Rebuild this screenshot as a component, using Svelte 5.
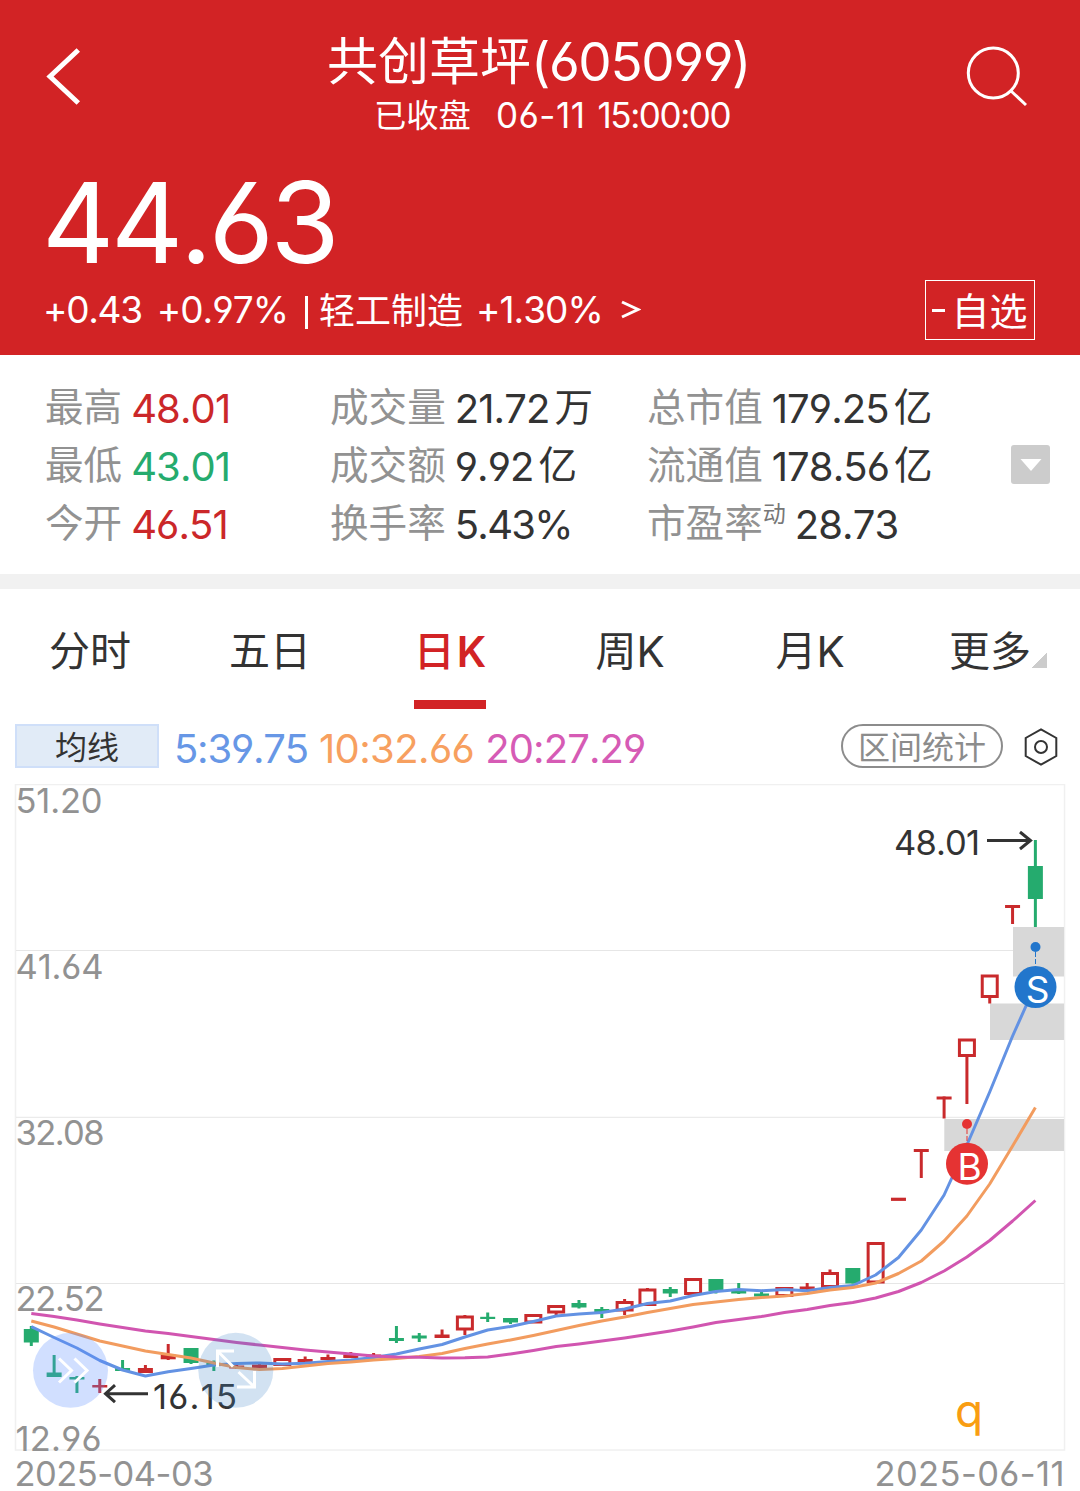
<script>
  const stats = [
    [
      { label: '最高', value: '48.01', tone: 'up' },
      { label: '最低', value: '43.01', tone: 'down' },
      { label: '今开', value: '46.51', tone: 'up' }
    ],
    [
      { label: '成交量', value: '21.72', unit: '万' },
      { label: '成交额', value: '9.92', unit: '亿' },
      { label: '换手率', value: '5.43%', tone: 'pct' }
    ],
    [
      { label: '总市值', value: '179.25', unit: '亿' },
      { label: '流通值', value: '178.56', unit: '亿' },
      { label: '市盈率', sup: '动', value: '28.73' }
    ]
  ];

  const tabs = [
    { cn: '分时' },
    { cn: '五日' },
    { cn: '日', k: true, active: true },
    { cn: '周', k: true },
    { cn: '月', k: true },
    { cn: '更多', more: true }
  ];

  // One candle per trading day: [kind, body top, body bottom, wick top, wick bottom]
  // g = falling, r = rising and flat, h = rising and hollow
  const candles = [
    ['g', 1329, 1342.5, 1326, 1346], ['g', 1372.5, 1377, 1355, 1377], ['g', 1377, 1379.5, 1376, 1393],
    ['r', 1385, 1387.5, 1379, 1393], ['g', 1368, 1371, 1360, 1371], ['r', 1368, 1373, 1365, 1373],
    ['r', 1354.7, 1359.3, 1344, 1360], ['g', 1348, 1363, 1348, 1364], ['g', 1363, 1365, 1360.5, 1371],
    ['r', 1365.5, 1368.5, 1365, 1369], ['r', 1364.5, 1370, 1364, 1370], ['h', 1358, 1366, 1358, 1366],
    ['r', 1359, 1362.5, 1356.5, 1363], ['r', 1357, 1360, 1354.5, 1360], ['r', 1354.7, 1358, 1352, 1358],
    ['r', 1354.5, 1358, 1353, 1358], ['g', 1338, 1341, 1326, 1343], ['g', 1335.5, 1338.5, 1333, 1342],
    ['r', 1334.5, 1338, 1329.5, 1338], ['h', 1315.5, 1330.5, 1315, 1335], ['g', 1316.8, 1319, 1312.5, 1322],
    ['g', 1318, 1322.5, 1318, 1324], ['h', 1314, 1323.5, 1314, 1323], ['h', 1305, 1313.5, 1305, 1315],
    ['g', 1303, 1307.5, 1300, 1308.5], ['g', 1309, 1312, 1307, 1318], ['h', 1301, 1311.5, 1299, 1315],
    ['h', 1288.5, 1306, 1288, 1306], ['g', 1289, 1293.5, 1287, 1297], ['h', 1278, 1295, 1278, 1295],
    ['g', 1279, 1291, 1279, 1293.5], ['g', 1290.5, 1293.5, 1283, 1294], ['g', 1293.5, 1296.5, 1291, 1297],
    ['h', 1287, 1297, 1287, 1297], ['r', 1286.5, 1289.5, 1283, 1290], ['h', 1272, 1288, 1269.5, 1288],
    ['g', 1268, 1283.5, 1268, 1283.5], ['h', 1242, 1283.5, 1242, 1283.5], ['r', 1197.7, 1200.9, 1198, 1200],
    ['r', 1149, 1152, 1149, 1178], ['r', 1096.5, 1099.5, 1096.5, 1118.5], ['h', 1038.5, 1057, 1039, 1104],
    ['h', 974.5, 998, 975, 1003.5], ['r', 905, 908, 905, 924], ['g', 866, 899, 840, 927]
  ];
  const ma5 = [1326.7, 1337.5, 1348, 1360.5, 1370, 1376, 1371.7, 1368.5, 1365, 1363.5, 1363, 1364, 1363.3, 1361.5, 1360, 1357.5, 1354, 1349, 1344.5, 1337, 1330, 1326.5, 1321.5, 1316, 1314, 1312.5, 1309, 1303.5, 1301, 1295.5, 1291.5, 1289.5, 1290.7, 1289.5, 1290.7, 1287.5, 1285.5, 1275, 1257.5, 1230, 1195, 1145, 1092, 1036, 985];
  const ma10 = [1321, 1327, 1334, 1341, 1346, 1351, 1354.5, 1358, 1363, 1367.5, 1369.5, 1368.5, 1366, 1363.5, 1362, 1360, 1358.5, 1356.5, 1353.5, 1348.5, 1344, 1340, 1335.5, 1330.5, 1325.5, 1321, 1317, 1312.5, 1308.5, 1304.5, 1302, 1299.5, 1297.5, 1296, 1293.5, 1290, 1287.5, 1283, 1273.5, 1261, 1241, 1216, 1184, 1146, 1107.5];
  const ma20 = [1313.5, 1316.5, 1320, 1324, 1327.5, 1331, 1333.5, 1336.5, 1339.5, 1342.5, 1345, 1347.5, 1350, 1352, 1354, 1356, 1357, 1357.3, 1358, 1357.8, 1357, 1354, 1350.5, 1346.5, 1344, 1341, 1338, 1334.5, 1331, 1327, 1322.5, 1319.5, 1316.5, 1312.5, 1309.5, 1305.5, 1302.5, 1298, 1291.5, 1282.5, 1271, 1257, 1240.5, 1221, 1200.5];

  const cx = (i) => 31.3 + i * 22.82;
  const line = (values) => values.map((y, i) => `${cx(i).toFixed(1)},${y}`).join(' ');

  const axis = [
    { t: '51.20', y: 812.5, w: 85 },
    { t: '41.64', y: 978.5, w: 86 },
    { t: '32.08', y: 1144.5, w: 87 },
    { t: '22.52', y: 1310.5, w: 87 },
    { t: '12.96', y: 1450.5, w: 84 }
  ];
</script>

<div class="page">
  <header>
    <div class="bar">
      <svg class="back" width="40" height="64" viewBox="44 45 40 64"><path d="M78.3 50 50 76.5 78.3 103" /></svg>
      <div class="heading">
        <h1><span>共创草坪</span><span class="num code">(605099)</span></h1>
        <p class="status"><span>已收盘</span><span class="num date">06-11</span><span class="num time">15:00:00</span></p>
      </div>
      <svg class="search" width="66" height="66" viewBox="964 43 66 66"><circle cx="993.3" cy="73" r="25" /><path d="m1011 91 15 14" /></svg>
    </div>
    <div class="price num">44.63</div>
    <div class="change">
      <span class="num c1">+0.43</span>
      <span class="num c2">+0.97%</span>
      <i class="sep"></i>
      <span class="sector">轻工制造</span>
      <span class="num c3">+1.30%</span>
      <svg class="gt" width="20" height="20" viewBox="0 0 20 20"><path d="M1 2 17 9.500 1 17" /></svg>
      <button class="fav"><i class="minus"></i><span>自选</span></button>
    </div>
  </header>

  <section class="stats">
    {#each stats as col}
      <div class="col">
        {#each col as s}
          <div class="stat">
            <span class="label">{s.label}</span>{#if s.sup}<span class="sup">{s.sup}</span>{/if}<span class="num value {s.tone ?? ''}">{s.value}</span>{#if s.unit}<span class="unit">{s.unit}</span>{/if}
          </div>
        {/each}
      </div>
    {/each}
    <div class="expand"><svg width="22" height="12" viewBox="0 0 22 12"><path d="M.5 0h21L11 12z" /></svg></div>
  </section>

  <nav>
    {#each tabs as t}
      <div class="tab" class:active={t.active}>
        <span>{t.cn}</span>{#if t.k}<span class="num k">K</span>{/if}{#if t.more}<i class="corner"></i>{/if}
      </div>
    {/each}
  </nav>

  <div class="tools">
    <div class="ma">均线</div>
    <span class="num m m5">5:39.75</span>
    <span class="num m m10">10:32.66</span>
    <span class="num m m20">20:27.29</span>
    <div class="range">区间统计</div>
    <svg class="gear" width="36" height="40" viewBox="1023 727 36 40"><path d="M1041 729.3 1056.3 738v18L1041 764.7 1025.7 756v-18z" /><circle cx="1041" cy="747" r="6" /></svg>
  </div>

  <svg class="chart" width="1080" height="707" viewBox="0 784 1080 707">
    <g class="grid">
      <rect x="15.5" y="784.5" width="1049" height="665.5" />
      <path d="M16 950.5h1048M16 1117.3h1048M16 1283.5h1048" />
    </g>
    <g class="gap">
      <rect x="1013" y="927" width="51" height="49.5" />
      <rect x="990" y="1003.5" width="74" height="36.5" />
      <rect x="944.3" y="1119" width="119.7" height="32" />
    </g>
    <g class="axis">
      {#each axis as a}
        <text x="15.5" y={a.y} textLength={a.w + 2}>{a.t}</text>
      {/each}
      <text x="14.5" y="1486" textLength="199">2025-04-03</text>
      <text x="874.5" y="1486" textLength="190">2025-06-11</text>
    </g>
    {#each candles as [kind, top, bottom, high, low], i}
      <g class={kind}>
        {#if kind === 'h'}
          <path d="M{cx(i)} {high}V{top + 1}M{cx(i)} {bottom - 1}V{low}" />
          <rect x={cx(i) - 7.5} y={top + 1.5} width="15" height={bottom - top - 3} />
        {:else}
          <path d="M{cx(i)} {high}V{low}" />
          <rect x={cx(i) - 7.5} y={top} width="15" height={bottom - top} />
        {/if}
      </g>
    {/each}
    <g class="line">
      <polyline class="l5" points={line(ma5)} />
      <polyline class="l10" points={line(ma10)} />
      <polyline class="l20" points={line(ma20)} />
    </g>
    <g class="mark">
      <text x="894" y="854.5" textLength="86">48.01</text>
      <path d="M987 840.5h43M1020 832l10.5 8.5-10.5 8.5" />
      <text x="153" y="1408.5" textLength="84">16.15</text>
      <path d="M148 1393.7h-42M115 1385.2l-9.5 8.5 9.5 8.5" />
    </g>
    <g class="sell">
      <circle cx="1035.5" cy="947" r="5" />
      <path d="M1035.5 952v14" />
      <circle cx="1035.5" cy="987" r="21" />
      <text x="1037.5" y="1002.5" text-anchor="middle">S</text>
    </g>
    <g class="buy">
      <circle cx="967" cy="1124" r="5" />
      <path d="M967 1129v14" />
      <circle cx="967" cy="1163.7" r="21" />
      <text x="969.5" y="1179.5" text-anchor="middle">B</text>
    </g>
    <circle class="forward" cx="70.5" cy="1370.3" r="37.5" />
    <circle class="full" cx="235.8" cy="1370.3" r="37.5" />
    <path class="glyph" d="M59 1358.5 71.5 1370.5 59 1382.5M74.5 1358.5 87 1370.5 74.5 1382.5" />
    <path class="glyph" d="M217.5 1367v-16h16.5M217.5 1351l15.5 15.5M237 1387h17.5v-16M254.5 1387l-16-15" />
    <text class="q" x="955" y="1427">q</text>
  </svg>
</div>

<style>
  :global(body) {
    margin: 0;
    background: #fff;
  }
  .page {
    width: 1080px;
    height: 1491px;
    overflow: hidden;
    display: flex;
    flex-direction: column;
    font-family: 'Noto Sans CJK SC', sans-serif;
    color: #333;
    background: #fff;
  }
  .num,
  text {
    font-family: Inter, 'Noto Sans CJK SC', sans-serif;
    font-feature-settings: 'cv03', 'cv04', 'calt' 0;
    font-kerning: none;
  }
  svg {
    display: block;
    flex: none;
    fill: none;
  }
  header {
    height: 355px;
    box-sizing: border-box;
    background: #d22325;
    color: #fff;
  }
  .bar {
    height: 160px;
    display: flex;
    justify-content: space-between;
    padding: 0 50px 0 44px;
  }
  .back {
    margin-top: 45px;
    stroke: #fff;
    stroke-width: 5;
  }
  .search {
    margin-top: 43px;
    stroke: #fff;
    stroke-width: 3;
  }
  .heading {
    flex: 1;
    display: flex;
    flex-direction: column;
    align-items: flex-start;
  }
  h1 {
    margin: 23px 0 0 243px;
    height: 70px;
    line-height: 70px;
    font-size: 51px;
    font-weight: 400;
    white-space: nowrap;
  }
  .code {
    font-size: 53px;
    letter-spacing: -1.4px;
    vertical-align: -1px;
  }
  .status {
    margin: 0 0 0 290px;
    height: 40px;
    line-height: 40px;
    font-size: 32.3px;
    white-space: nowrap;
  }
  .date,
  .time {
    font-size: 35px;
    letter-spacing: -1.4px;
    vertical-align: -0.5px;
  }
  .date {
    margin: 0 12px 0 25px;
    letter-spacing: 0.5px;
  }
  .price {
    height: 124px;
    line-height: 124px;
    padding-left: 42px;
    font-size: 112px;
    letter-spacing: -3.4px;
  }
  .change {
    height: 60px;
    line-height: 60px;
    display: flex;
    align-items: center;
    margin-top: -4px;
    padding: 0 45px 0 43px;
    font-size: 36px;
    white-space: nowrap;
  }
  .change .num {
    font-size: 37px;
    letter-spacing: -1.3px;
  }
  .change .c2 {
    margin-left: 15px;
    letter-spacing: -1px;
  }
  .sep {
    width: 3px;
    height: 33px;
    margin: 4px 11px 0 17px;
    background: #fff;
  }
  .sector {
    margin-top: -5px;
  }
  .change .c3 {
    margin-left: 13px;
    letter-spacing: -1px;
  }
  .gt {
    margin-left: 18px;
    stroke: #fff;
    stroke-width: 3;
  }
  .fav {
    display: flex;
    align-items: center;
    justify-content: center;
    width: 110px;
    height: 60px;
    margin-left: auto;
    padding: 0;
    border: 1px solid #fff;
    background: none;
    color: #fff;
    font: 38px/58px 'Noto Sans CJK SC', sans-serif;
  }
  .fav span {
    margin-top: -2px;
  }
  .minus {
    width: 13px;
    height: 3px;
    margin-right: 6px;
    background: #fff;
  }
  .stats {
    height: 219px;
    box-sizing: border-box;
    padding: 22px 30px 0 45px;
    display: grid;
    grid-template-columns: 285px 317px 1fr 39px;
  }
  .stat {
    height: 58px;
    line-height: 58px;
    display: flex;
    align-items: baseline;
    font-size: 38.6px;
    white-space: nowrap;
  }
  .label,
  .unit {
    translate: 0 -2px;
  }
  .label {
    color: #929292;
  }
  .unit {
    margin-left: 5px;
  }
  .sup {
    align-self: flex-start;
    height: 38px;
    line-height: 38px;
    color: #777;
    font-size: 23px;
  }
  .value {
    margin-left: 9px;
    font-size: 40px;
    letter-spacing: -0.9px;
  }
  .pct {
    letter-spacing: -1.7px;
  }
  .up {
    color: #cb2729;
  }
  .down {
    color: #25ab6e;
  }
  .expand {
    width: 39px;
    height: 39px;
    margin-top: 68px;
    display: flex;
    align-items: center;
    justify-content: center;
    border-radius: 3px;
    background: #ccc;
  }
  .expand svg {
    fill: #fff;
  }
  nav {
    height: 135px;
    box-sizing: border-box;
    border-top: 15px solid #f1f1f1;
    display: grid;
    grid-template-columns: repeat(6, 180px);
  }
  .tab {
    position: relative;
    display: flex;
    justify-content: center;
    height: 120px;
    line-height: 118px;
    font-size: 41px;
  }
  .k {
    margin-top: 4px;
    font-size: 42px;
  }
  .active {
    color: #d22325;
    font-weight: 500;
  }
  .active .k {
    margin-left: 2px;
    font-weight: 600;
  }
  .active::after {
    content: '';
    position: absolute;
    left: 54px;
    bottom: 0;
    width: 72px;
    height: 9px;
    background: #d22325;
  }
  .corner {
    position: absolute;
    left: 132px;
    top: 64px;
    width: 15px;
    height: 15px;
    background: linear-gradient(135deg, transparent 50%, #ccc 50%);
  }
  .tools {
    height: 75px;
    box-sizing: border-box;
    display: flex;
    align-items: flex-start;
    padding: 15px 21px 0 15px;
    line-height: 44px;
    font-size: 32px;
    white-space: nowrap;
  }
  .ma {
    box-sizing: border-box;
    width: 144px;
    height: 44px;
    border: 2px solid #cfdff9;
    background: #e1ebf7;
    text-align: center;
    line-height: 39px;
    margin-right: 15px;
  }
  .m {
    font-size: 40px;
    line-height: 49px;
    letter-spacing: -0.6px;
    margin-right: 11px;
  }
  .m5 {
    color: #6797e6;
    letter-spacing: -1.2px;
  }
  .m10 {
    color: #f7a05f;
  }
  .m20 {
    color: #d65bb5;
    letter-spacing: -0.9px;
  }
  .range {
    box-sizing: border-box;
    width: 162px;
    height: 44px;
    margin-left: auto;
    border: 2px solid #8c8c8c;
    border-radius: 22px;
    line-height: 39px;
    text-align: center;
    color: #8c8c8c;
  }
  .gear {
    margin: 3px 0 0 20px;
    stroke: #333;
    stroke-width: 2;
  }
  .grid rect {
    stroke: #f0f0f0;
    stroke-width: 1.5;
  }
  .grid path {
    stroke: #e6e6e6;
  }
  .gap {
    fill: #d8d8d8;
  }
  .axis {
    fill: #929292;
    font-size: 34.5px;
  }
  .g path,
  .r path,
  .h path {
    stroke-width: 3;
  }
  .g path {
    stroke: #25ab6e;
  }
  .g rect {
    fill: #25ab6e;
  }
  .r path {
    stroke: #c92a2c;
  }
  .r rect {
    fill: #c92a2c;
  }
  .h path,
  .h rect {
    stroke: #c92a2c;
  }
  .h rect {
    stroke-width: 3;
    fill: #fff;
  }
  .line {
    stroke-width: 3;
    stroke-linejoin: round;
  }
  .l5 {
    stroke: #6392e3;
  }
  .l10 {
    stroke: #f29c5f;
  }
  .l20 {
    stroke: #d155b0;
  }
  .mark path {
    stroke: #333;
    stroke-width: 3;
  }
  .mark text {
    fill: #333;
    font-size: 34.5px;
  }
  .sell circle {
    fill: #2276cc;
  }
  .sell path {
    stroke: #2276cc;
    stroke-dasharray: 5 2;
  }
  .buy circle {
    fill: #e53333;
  }
  .buy path {
    stroke: #e53333;
    stroke-dasharray: 5 2;
  }
  .sell text,
  .buy text {
    fill: #fff;
    font-size: 37px;
  }
  .forward {
    fill: rgba(91, 140, 255, 0.28);
  }
  .full {
    fill: rgba(60, 130, 200, 0.23);
  }
  .glyph {
    stroke: #fff;
    stroke-width: 3;
  }
  .q {
    fill: #f99d12;
    font-size: 46px;
  }
</style>
